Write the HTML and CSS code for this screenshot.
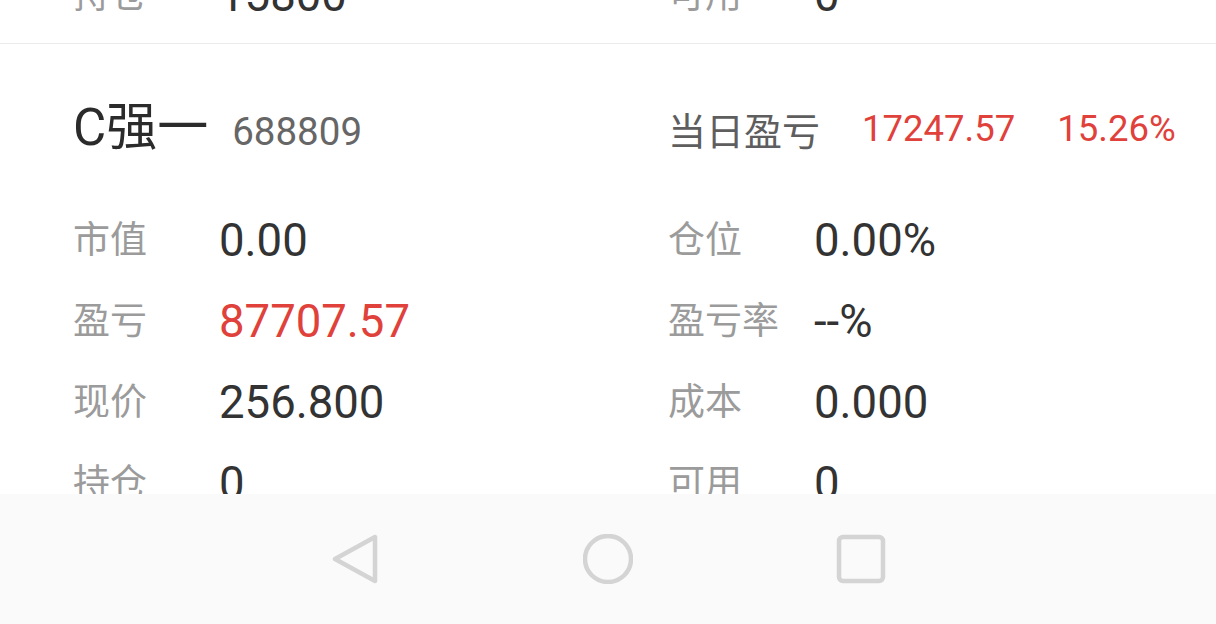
FILE: index.html
```html
<!DOCTYPE html>
<html lang="zh-CN">
<head>
    <meta charset="utf-8">
    <title>持仓</title>
    <link rel="stylesheet" href="styles.css">
</head>
<body>
    <div class="list">
        <!-- previous stock, scrolled mostly out of view -->
        <div class="stock stock-prev">
            <div class="grid">
                <div class="cell"><span class="label">持仓</span><span class="value">15800</span></div>
                <div class="cell"><span class="label">可用</span><span class="value">0</span></div>
            </div>
        </div>

        <div class="stock">
            <div class="head">
                <div class="head-left">
                    <span class="name">C强一</span>
                    <span class="code">688809</span>
                </div>
                <div class="head-right">
                    <span class="day-label">当日盈亏</span>
                    <span class="day-num red">17247.57</span>
                    <span class="day-num red">15.26%</span>
                </div>
            </div>

            <div class="grid">
                <div class="cell"><span class="label">市值</span><span class="value">0.00</span></div>
                <div class="cell"><span class="label">仓位</span><span class="value">0.00%</span></div>
                <div class="cell"><span class="label">盈亏</span><span class="value red">87707.57</span></div>
                <div class="cell"><span class="label">盈亏率</span><span class="value">--%</span></div>
                <div class="cell"><span class="label">现价</span><span class="value">256.800</span></div>
                <div class="cell"><span class="label">成本</span><span class="value">0.000</span></div>
                <div class="cell"><span class="label">持仓</span><span class="value">0</span></div>
                <div class="cell"><span class="label">可用</span><span class="value">0</span></div>
            </div>
        </div>
    </div>

    <!-- system navigation bar -->
    <div class="navbar">
        <svg class="nav-icon" viewBox="0 0 50 50" width="50" height="50">
            <path d="M5 25 L45 3 L45 47 Z" />
        </svg>
        <svg class="nav-icon" viewBox="0 0 50 50" width="50" height="50">
            <circle cx="25" cy="25" r="23" />
        </svg>
        <svg class="nav-icon" viewBox="0 0 50 50" width="50" height="50">
            <rect x="3" y="3" width="44" height="44" rx="4" />
        </svg>
    </div>
</body>
</html>
```

FILE: styles.css
```css
body {
    margin: 0;
    font-family: Roboto, "Noto Sans CJK SC", sans-serif;
    background-color: #ffffff;
    color: #333333;
    overflow: hidden;
}

.list {
    height: 624px;
    overflow: hidden;
}

.stock {
    padding-left: 73px;
}

.stock-prev {
    margin-top: -45px;
    padding-bottom: 7px;
    border-bottom: 1px solid #ebebeb;
}

.head {
    display: grid;
    grid-template-columns: 595px auto;
    align-items: center;
    height: 80px;
    margin-top: 44px;
}

.head-left {
    display: flex;
    align-items: baseline;
    gap: 24px;
}

.name {
    font-size: 51px;
    color: #2b2b2b;
    line-height: 80px;
}

.code {
    font-size: 38.5px;
    color: #666666;
}

.head-right {
    display: flex;
    align-items: center;
    gap: 42px;
}

.day-label {
    font-size: 38px;
    color: #5e5e5e;
}

.day-num {
    font-size: 36.5px;
}

.stock .head + .grid {
    padding-top: 32px;
}

.grid {
    display: grid;
    grid-template-columns: 595px auto;
}

.cell {
    display: flex;
    align-items: center;
    height: 81px;
    line-height: 81px;
}

.label {
    width: 146px;
    font-size: 37px;
    color: #9b9b9b;
}

.value {
    font-size: 45.5px;
    color: #333333;
}

.red {
    color: #e0413a;
}

.navbar {
    position: fixed;
    left: 0;
    right: 0;
    bottom: 0;
    height: 130px;
    background-color: #fafafa;
    display: flex;
    justify-content: center;
    align-items: center;
    gap: 203px;
}

.nav-icon {
    fill: none;
    stroke: #d4d4d4;
    stroke-width: 4.5;
    stroke-linejoin: round;
}
```
